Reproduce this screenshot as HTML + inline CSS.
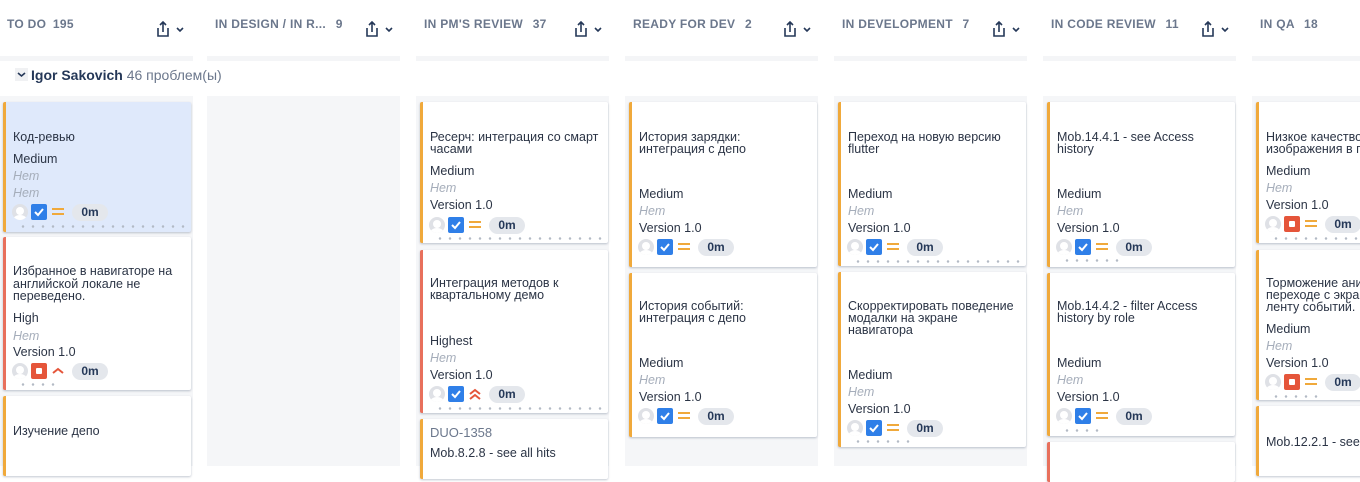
<!DOCTYPE html>
<html><head><meta charset="utf-8"><style>
*{margin:0;padding:0;box-sizing:border-box}
body{width:1360px;height:460px;overflow:hidden;background:#fff;font-family:"Liberation Sans","Noto Sans CJK SC",sans-serif;color:#172b4d;position:relative}
.h{position:absolute;top:17px;font-size:12px;font-weight:bold;color:#6b778c;letter-spacing:0.3px;white-space:nowrap}
.h b{margin-left:6px}
.strip{position:absolute;top:56px;height:5px;width:193px;background:#f4f5f7}
.col{position:absolute;top:96px;height:370px;width:193px;background:#f5f6f8}
.c{position:absolute;width:188px;background:#fff;border-left:3px solid #f0a93b;box-shadow:0 1px 2px rgba(9,30,66,.25);border-radius:2px;font-size:12px}
.c.r{border-left-color:#e8705c}
.c.sel{background:#dfe9fb}
.t{position:absolute;left:7px;line-height:12px;white-space:nowrap;color:#2b3445;font-size:12.5px}
.g{color:#a5adba;font-style:italic}
.ic{position:absolute;left:6px;height:17px;width:100px}
.av{position:absolute;left:0;top:0;width:16px;height:16px;border-radius:50%;background:#dfe1e6;overflow:hidden}
.av:after{content:"";position:absolute;left:4px;top:3px;width:8px;height:8px;border-radius:50%;background:#fff}
.av:before{content:"";position:absolute;left:1px;top:11px;width:14px;height:10px;border-radius:50%;background:#fff}
.cb{position:absolute;left:19px;top:0;width:16px;height:16px;background:#2f7fe8;border-radius:2px}
.rd{position:absolute;left:19px;top:0;width:16px;height:16px;background:#e5553a;border-radius:2px}
.rd:after{content:"";position:absolute;left:5px;top:5px;width:6px;height:6px;background:#fff;border-radius:1px}
.pm{position:absolute;left:60px;top:0;width:36px;height:17px;border-radius:9px;background:#e4e7ec;font-size:12px;font-weight:bold;line-height:17px;text-align:center;color:#253858}
.dots{position:absolute;left:12px;height:3px;background-image:radial-gradient(circle,#b3bac5 1.1px,transparent 1.4px);background-size:10px 3px}
</style></head><body>

<div class="h" style="left:7px">TO DO <b style="margin-left:3px">195</b></div>
<div class="h" style="left:215px">IN DESIGN / IN R... <b>9</b></div>
<div class="h" style="left:424px">IN PM'S REVIEW <b>37</b></div>
<div class="h" style="left:633px">READY FOR DEV <b>2</b></div>
<div class="h" style="left:842px">IN DEVELOPMENT <b>7</b></div>
<div class="h" style="left:1051px">IN CODE REVIEW <b>11</b></div>
<div class="h" style="left:1260px">IN QA <b>18</b></div>

<svg width="1360" height="50" style="position:absolute;left:0;top:0">
<defs><g id="sh"><path d="M0 6 v8 h10 v-8" fill="none" stroke="#253858" stroke-width="1.6"/><path d="M5 10 V0 M2 3 L5 0 L8 3" fill="none" stroke="#253858" stroke-width="1.6"/><path d="M19 6 l3 3 l3 -3" fill="none" stroke="#253858" stroke-width="1.6"/></g></defs>
<use href="#sh" x="158" y="22"/><use href="#sh" x="367" y="22"/><use href="#sh" x="576" y="22"/><use href="#sh" x="785" y="22"/><use href="#sh" x="994" y="22"/><use href="#sh" x="1203" y="22"/>
</svg>

<div class="strip" style="left:0"></div><div class="strip" style="left:207px"></div><div class="strip" style="left:416px"></div><div class="strip" style="left:625px"></div><div class="strip" style="left:834px"></div><div class="strip" style="left:1043px"></div><div class="strip" style="left:1252px"></div>

<div style="position:absolute;left:15px;top:67px;font-size:14px;white-space:nowrap"><span style="display:inline-block;width:13px;height:13px;background:#f0f1f3;vertical-align:-1px;position:relative"><svg width="13" height="13" style="position:absolute;left:0;top:0"><path d="M3 5 l3.5 3 l3.5 -3" fill="none" stroke="#253858" stroke-width="1.6"/></svg></span><b style="color:#253858;margin-left:3px">Igor Sakovich</b> <span style="color:#6b778c">46 проблем(ы)</span></div>

<div class="col" style="left:0"></div><div class="col" style="left:207px"></div><div class="col" style="left:416px"></div><div class="col" style="left:625px"></div><div class="col" style="left:834px"></div><div class="col" style="left:1043px"></div><div class="col" style="left:1252px"></div>

<svg width="0" height="0" style="position:absolute"><defs>
<g id="ck"><path d="M4 8 l3 3 l5 -6" fill="none" stroke="#fff" stroke-width="2"/></g>
<g id="eq"><path d="M0 5 h12 M0 10 h12" stroke="#f0a93b" stroke-width="2"/></g>
<g id="hi"><path d="M1 10 l5 -4 l5 4" fill="none" stroke="#e5553a" stroke-width="2"/></g>
<g id="hh"><path d="M1 8 l5 -4 l5 4 M1 13 l5 -4 l5 4" fill="none" stroke="#e5553a" stroke-width="2"/></g>
</defs></svg>

<div class="c sel" style="left:3px;top:102px;height:130px">
<div class="t" style="top:29px">Код-ревью</div>
<div class="t" style="top:51px">Medium</div>
<div class="t g" style="top:68px">Нет</div>
<div class="t g" style="top:85px">Нет</div>
<div class="ic" style="top:102px"><div class="av"></div><div class="cb"><svg width="16" height="16"><use href="#ck"/></svg></div><svg width="14" height="16" style="position:absolute;left:40px;top:0"><use href="#eq"/></svg><div class="pm">0m</div></div>
<div class="dots" style="top:123px;width:170px"></div>
</div>
<div class="c r" style="left:3px;top:237px;height:153px">
<div class="t" style="top:28px;line-height:12.5px">Избранное в навигаторе на<br>английской локале не<br>переведено.</div>
<div class="t" style="top:75px">High</div>
<div class="t g" style="top:93px">Нет</div>
<div class="t" style="top:109px">Version 1.0</div>
<div class="ic" style="top:126px"><div class="av"></div><div class="rd"></div><svg width="14" height="16" style="position:absolute;left:40px;top:0"><use href="#hi"/></svg><div class="pm">0m</div></div>
<div class="dots" style="top:146px;width:40px"></div>
</div>
<div class="c" style="left:3px;top:396px;height:80px">
<div class="t" style="top:29px">Изучение депо</div>
</div>

<div class="c" style="left:420px;top:102px;height:141px">
<div class="t" style="top:29px">Ресерч: интеграция со смарт<br>часами</div>
<div class="t" style="top:63px">Medium</div>
<div class="t g" style="top:80px">Нет</div>
<div class="t" style="top:97px">Version 1.0</div>
<div class="ic" style="top:115px"><div class="av"></div><div class="cb"><svg width="16" height="16"><use href="#ck"/></svg></div><svg width="14" height="16" style="position:absolute;left:40px;top:0"><use href="#eq"/></svg><div class="pm">0m</div></div>
<div class="dots" style="top:135px;width:170px"></div>
</div>
<div class="c r" style="left:420px;top:250px;height:163px">
<div class="t" style="top:27px">Интеграция методов к<br>квартальному демо</div>
<div class="t" style="top:85px">Highest</div>
<div class="t g" style="top:102px">Нет</div>
<div class="t" style="top:119px">Version 1.0</div>
<div class="ic" style="top:136px"><div class="av"></div><div class="cb"><svg width="16" height="16"><use href="#ck"/></svg></div><svg width="14" height="16" style="position:absolute;left:40px;top:0"><use href="#hh"/></svg><div class="pm">0m</div></div>
<div class="dots" style="top:157px;width:170px"></div>
</div>
<div class="c" style="left:420px;top:419px;height:60px">
<div class="t" style="top:8px;font-size:13px;color:#6b778c">DUO-1358</div>
<div class="t" style="top:28px">Mob.8.2.8 - see all hits</div>
</div>

<div class="c" style="left:629px;top:102px;height:165px">
<div class="t" style="top:29px">История зарядки:<br>интеграция с депо</div>
<div class="t" style="top:86px">Medium</div>
<div class="t g" style="top:103px">Нет</div>
<div class="t" style="top:120px">Version 1.0</div>
<div class="ic" style="top:137px"><div class="av"></div><div class="cb"><svg width="16" height="16"><use href="#ck"/></svg></div><svg width="14" height="16" style="position:absolute;left:40px;top:0"><use href="#eq"/></svg><div class="pm">0m</div></div>
</div>
<div class="c" style="left:629px;top:273px;height:164px">
<div class="t" style="top:27px">История событий:<br>интеграция с депо</div>
<div class="t" style="top:84px">Medium</div>
<div class="t g" style="top:101px">Нет</div>
<div class="t" style="top:118px">Version 1.0</div>
<div class="ic" style="top:135px"><div class="av"></div><div class="cb"><svg width="16" height="16"><use href="#ck"/></svg></div><svg width="14" height="16" style="position:absolute;left:40px;top:0"><use href="#eq"/></svg><div class="pm">0m</div></div>
</div>

<div class="c" style="left:838px;top:102px;height:164px">
<div class="t" style="top:29px">Переход на новую версию<br>flutter</div>
<div class="t" style="top:86px">Medium</div>
<div class="t g" style="top:103px">Нет</div>
<div class="t" style="top:120px">Version 1.0</div>
<div class="ic" style="top:137px"><div class="av"></div><div class="cb"><svg width="16" height="16"><use href="#ck"/></svg></div><svg width="14" height="16" style="position:absolute;left:40px;top:0"><use href="#eq"/></svg><div class="pm">0m</div></div>
<div class="dots" style="top:158px;width:170px"></div>
</div>
<div class="c" style="left:838px;top:272px;height:175px">
<div class="t" style="top:28px">Скорректировать поведение<br>модалки на экране<br>навигатора</div>
<div class="t" style="top:97px">Medium</div>
<div class="t g" style="top:114px">Нет</div>
<div class="t" style="top:131px">Version 1.0</div>
<div class="ic" style="top:148px"><div class="av"></div><div class="cb"><svg width="16" height="16"><use href="#ck"/></svg></div><svg width="14" height="16" style="position:absolute;left:40px;top:0"><use href="#eq"/></svg><div class="pm">0m</div></div>
<div class="dots" style="top:168px;width:60px"></div>
</div>

<div class="c" style="left:1047px;top:102px;height:165px">
<div class="t" style="top:29px">Mob.14.4.1 - see Access<br>history</div>
<div class="t" style="top:86px">Medium</div>
<div class="t g" style="top:103px">Нет</div>
<div class="t" style="top:120px">Version 1.0</div>
<div class="ic" style="top:137px"><div class="av"></div><div class="cb"><svg width="16" height="16"><use href="#ck"/></svg></div><svg width="14" height="16" style="position:absolute;left:40px;top:0"><use href="#eq"/></svg><div class="pm">0m</div></div>
<div class="dots" style="top:157px;width:60px"></div>
</div>
<div class="c" style="left:1047px;top:273px;height:163px">
<div class="t" style="top:27px">Mob.14.4.2 - filter Access<br>history by role</div>
<div class="t" style="top:84px">Medium</div>
<div class="t g" style="top:101px">Нет</div>
<div class="t" style="top:118px">Version 1.0</div>
<div class="ic" style="top:135px"><div class="av"></div><div class="cb"><svg width="16" height="16"><use href="#ck"/></svg></div><svg width="14" height="16" style="position:absolute;left:40px;top:0"><use href="#eq"/></svg><div class="pm">0m</div></div>
<div class="dots" style="top:156px;width:40px"></div>
</div>
<div class="c r" style="left:1047px;top:442px;height:40px"></div>

<div class="c" style="left:1256px;top:102px;height:141px">
<div class="t" style="top:29px">Низкое качество<br>изображения в п</div>
<div class="t" style="top:63px">Medium</div>
<div class="t g" style="top:80px">Нет</div>
<div class="t" style="top:97px">Version 1.0</div>
<div class="ic" style="top:114px"><div class="av"></div><div class="rd"></div><svg width="14" height="16" style="position:absolute;left:40px;top:0"><use href="#eq"/></svg><div class="pm">0m</div></div>
<div class="dots" style="top:135px;width:100px"></div>
</div>
<div class="c" style="left:1256px;top:250px;height:150px">
<div class="t" style="top:27px">Торможение ани<br>переходе с экра<br>ленту событий. !</div>
<div class="t" style="top:73px">Medium</div>
<div class="t g" style="top:90px">Нет</div>
<div class="t" style="top:107px">Version 1.0</div>
<div class="ic" style="top:124px"><div class="av"></div><div class="rd"></div><svg width="14" height="16" style="position:absolute;left:40px;top:0"><use href="#eq"/></svg><div class="pm">0m</div></div>
<div class="dots" style="top:145px;width:50px"></div>
</div>
<div class="c" style="left:1256px;top:406px;height:70px">
<div class="t" style="top:30px">Mob.12.2.1 - see all</div>
</div>

</body></html>
